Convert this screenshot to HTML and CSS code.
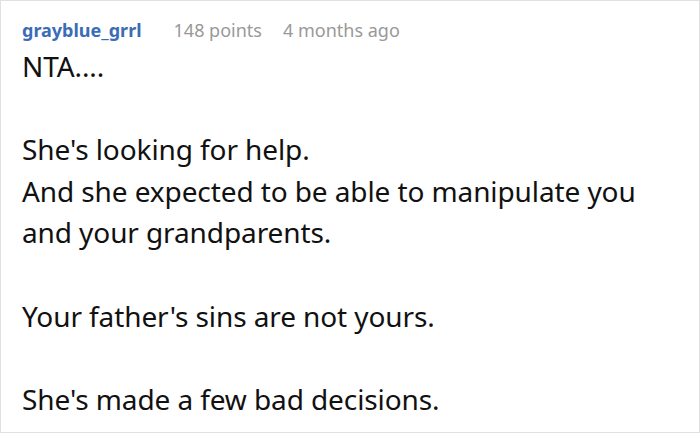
FILE: index.html
```html
<!DOCTYPE html>
<html>
<head>
<meta charset="utf-8">
<link rel="stylesheet" href="styles.css">
</head>
<body>
<div class="comment">
  <div class="meta">
    <span class="author">grayblue_grrl</span>
    <span class="points">148 points</span>
    <span class="time">4 months ago</span>
  </div>
  <div class="body">
    <p>NTA....</p>
    <p class="blank">&nbsp;</p>
    <p>She's looking for help.</p>
    <p>And she expected to be able to manipulate you and your grandparents.</p>
    <p class="blank">&nbsp;</p>
    <p>Your father's sins are not yours.</p>
    <p class="blank">&nbsp;</p>
    <p>She's made a few bad decisions.</p>
  </div>
</div>
</body>
</html>
```
FILE: styles.css
```css
html, body {
  margin: 0;
  padding: 0;
  background: #fff;
}
.comment {
  width: 700px;
  height: 433px;
  box-sizing: border-box;
  border: 1px solid #e0e0e0;
  padding: 13px 21px 0 21px;
  font-family: "Noto Sans", sans-serif;
  overflow: hidden;
}
.meta {
  display: flex;
  font-size: 18px;
  line-height: 32px;
}
.author {
  color: #3a6db5;
  font-weight: bold;
  margin-right: 32px;
}
.points {
  color: #999;
  margin-right: 21px;
}
.time {
  color: #999;
}
.body {
  font-size: 28px;
  line-height: 41.6px;
  letter-spacing: -0.1px;
  color: #111;
}
.body p {
  margin: 0;
}
```
